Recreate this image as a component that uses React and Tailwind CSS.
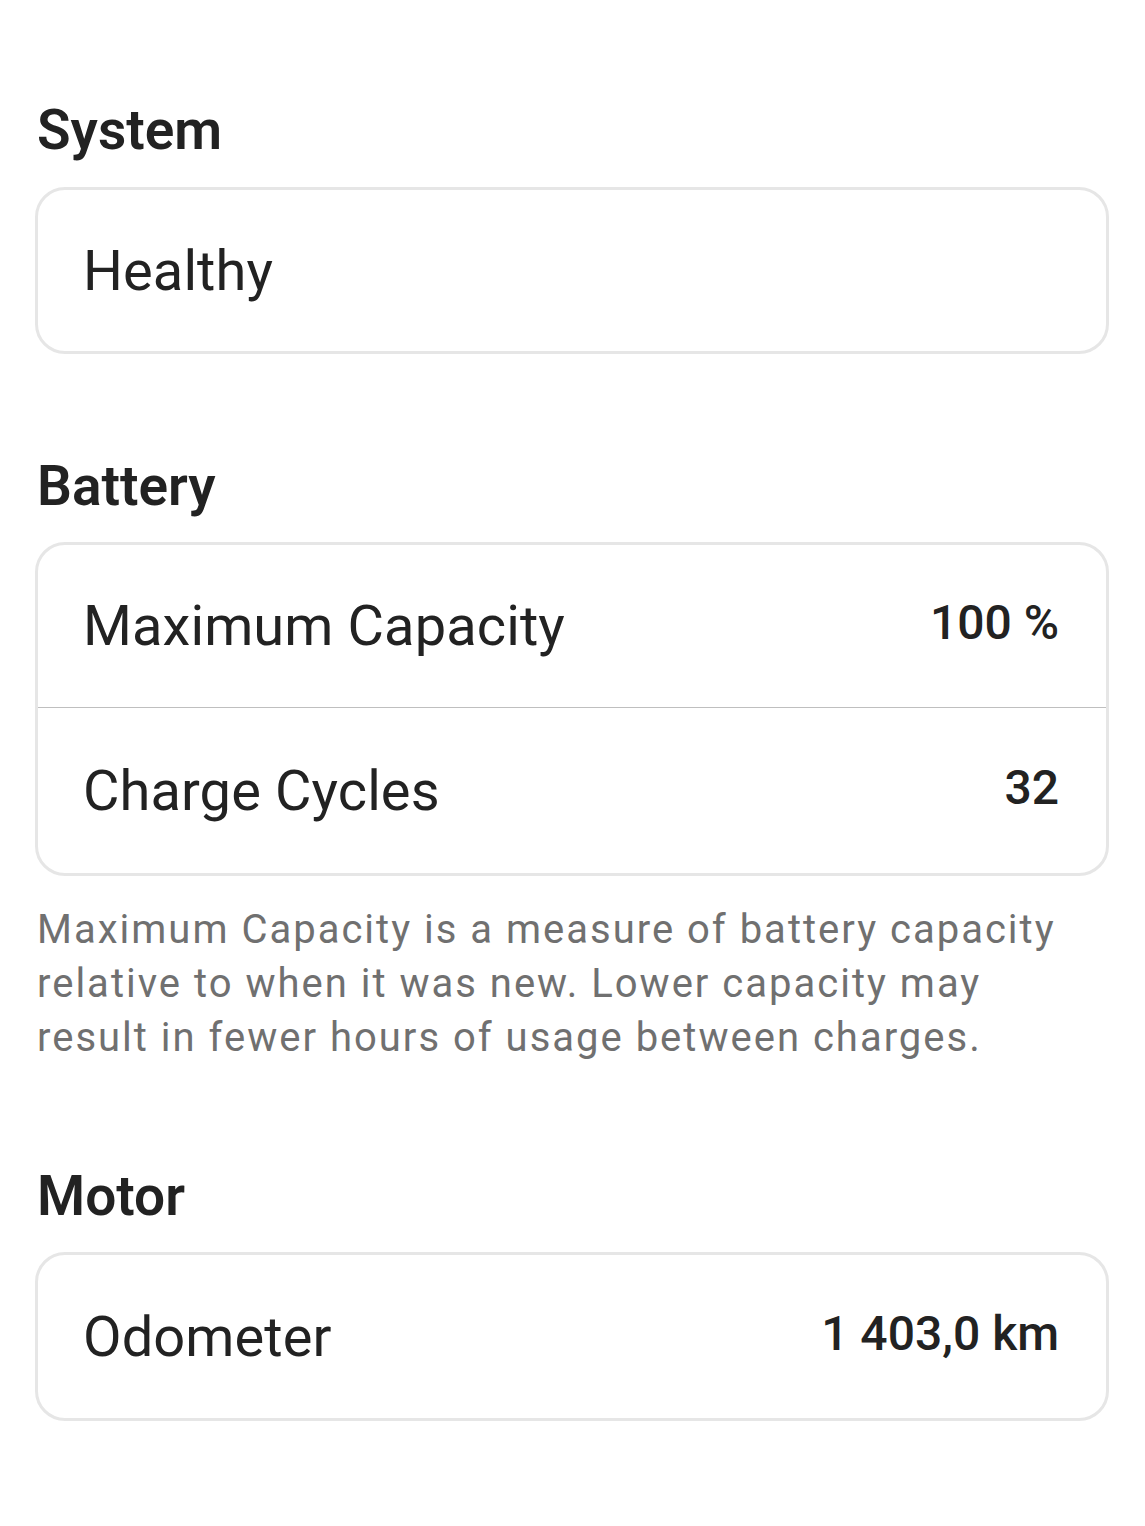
const font = { fontFamily: 'Roboto, "Noto Sans", sans-serif' };

const Row = ({ label, value, divider, h = 'h-[163px]' }) => (
  <div
    className={`flex items-center justify-between ${h} pl-[45px] pr-[47px] ${
      divider ? 'border-b border-[#bfbfbf]' : ''
    }`}
  >
    <span className="text-[56px] leading-none text-[#222222] tracking-[0.1px]">{label}</span>
    {value && (
      <span className="text-[48px] leading-none font-medium text-[#222222] -mt-[6px]">{value}</span>
    )}
  </div>
);

const Card = ({ children }) => (
  <div className="border-[3px] border-[#e6e6e6] rounded-[30px] overflow-hidden bg-white">
    {children}
  </div>
);

const Heading = ({ children, className = '' }) => (
  <h2 className={`text-[55px] leading-[67px] font-semibold text-[#222222] ml-[2px] ${className}`}>
    {children}
  </h2>
);

export default function App() {
  return (
    <div className="min-h-[1526px] w-[1145px] bg-white pt-[97px] pl-[35px] pr-[36px]" style={font}>
      {/* System */}
      <Heading className="mb-[23px]">System</Heading>
      <Card>
        <Row label="Healthy" h="h-[161px]" />
      </Card>

      {/* Battery */}
      <Heading className="mt-[99px] mb-[22px]">Battery</Heading>
      <Card>
        <Row label="Maximum Capacity" value="100 %" divider />
        <Row label="Charge Cycles" value="32" h="h-[165px]" />
      </Card>
      <p className="mt-[27px] ml-[2px] w-[1030px] text-[40px] leading-[54px] text-[#707070] tracking-[2px]">
        Maximum Capacity is a measure of battery capacity relative to when it was new. Lower capacity may
        result in fewer hours of usage between charges.
      </p>

      {/* Motor */}
      <Heading className="mt-[98px] mb-[22px]">Motor</Heading>
      <Card>
        <Row label="Odometer" value="1 403,0 km" h="h-[163px]" />
      </Card>
    </div>
  );
}
